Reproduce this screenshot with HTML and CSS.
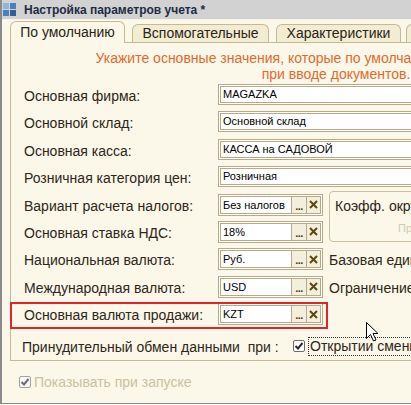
FILE: index.html
```html
<!DOCTYPE html>
<html lang="ru">
<head>
<meta charset="utf-8">
<title>Настройка параметров учета</title>
<link rel="stylesheet" href="styles.css">
</head>
<body>
<div class="window">
  <div class="titlebar">
    <svg class="appicon" width="13" height="13" viewBox="0 0 13 13">
      <rect x="0" y="0" width="6" height="6" fill="#8fb6e0"/>
      <rect x="7" y="0" width="6" height="6" fill="#4a7fc0"/>
      <rect x="0" y="7" width="6" height="6" fill="#4a7fc0"/>
      <rect x="7" y="7" width="6" height="6" fill="#2f5f9e"/>
    </svg>
    <span class="title">Настройка параметров учета *</span>
  </div>
  <div class="content">
    <div class="tabs">
      <div class="tab active">По умолчанию</div>
      <div class="tab t2">Вспомогательные</div>
      <div class="tab t3">Характеристики</div>
      <div class="tab stub"></div>
    </div>
    <div class="panel">
      <p class="hint">Укажите основные значения, которые по умолчанию будут подставляться<br>при вводе документов.</p>
      <div class="row"><span class="label">Основная фирма:</span><div class="field wide"><span class="value">MAGAZKA</span></div></div>
      <div class="row"><span class="label">Основной склад:</span><div class="field wide"><span class="value">Основной склад</span></div></div>
      <div class="row"><span class="label">Основная касса:</span><div class="field wide"><span class="value">КАССА на САДОВОЙ</span></div></div>
      <div class="row"><span class="label">Розничная категория цен:</span><div class="field wide"><span class="value">Розничная</span></div></div>
      <div class="split">
        <div class="col">
          <div class="row"><span class="label">Вариант расчета налогов:</span>
            <div class="field short"><span class="value">Без налогов</span><span class="btn dots">...</span><span class="btn clear"><svg width="9" height="9" viewBox="0 0 9 9"><path d="M1 1L8 8M8 1L1 8" stroke="#5a4812" stroke-width="2"/></svg></span></div>
          </div>
          <div class="row"><span class="label">Основная ставка НДС:</span>
            <div class="field short"><span class="value">18%</span><span class="btn dots">...</span><span class="btn clear"><svg width="9" height="9" viewBox="0 0 9 9"><path d="M1 1L8 8M8 1L1 8" stroke="#5a4812" stroke-width="2"/></svg></span></div>
          </div>
        </div>
        <div class="groupbox"><span class="gb-title">Коэфф. округления</span><span class="gb-sub">Применять</span></div>
      </div>
      <div class="row"><span class="label">Национальная валюта:</span>
        <div class="field short"><span class="value">Руб.</span><span class="btn dots">...</span><span class="btn clear"><svg width="9" height="9" viewBox="0 0 9 9"><path d="M1 1L8 8M8 1L1 8" stroke="#5a4812" stroke-width="2"/></svg></span></div>
        <span class="side">Базовая единица</span>
      </div>
      <div class="row"><span class="label">Международная валюта:</span>
        <div class="field short"><span class="value">USD</span><span class="btn dots">...</span><span class="btn clear"><svg width="9" height="9" viewBox="0 0 9 9"><path d="M1 1L8 8M8 1L1 8" stroke="#5a4812" stroke-width="2"/></svg></span></div>
        <span class="side">Ограничение</span>
      </div>
      <div class="row highlight"><span class="label">Основная валюта продажи:</span>
        <div class="field short"><span class="value">KZT</span><span class="btn dots">...</span><span class="btn clear"><svg width="9" height="9" viewBox="0 0 9 9"><path d="M1 1L8 8M8 1L1 8" stroke="#5a4812" stroke-width="2"/></svg></span></div>
      </div>
      <div class="row last"><span class="label exch">Принудительный обмен данными  при :</span>
        <span class="check"><svg width="10" height="10" viewBox="0 0 10 10"><path d="M1.5 5L4 7.5L8.5 2" fill="none" stroke="#2a2a2a" stroke-width="2"/></svg></span>
        <span class="focus">Открытии смены</span>
      </div>
    </div>
    <div class="startup">
      <span class="check disabled"><svg width="10" height="10" viewBox="0 0 10 10"><path d="M1.5 5L4 7.5L8.5 2" fill="none" stroke="#6e6e6e" stroke-width="2"/></svg></span>
      <span class="startup-text">Показывать при запуске</span>
    </div>
  </div>
  <svg class="cursor" width="13" height="20" viewBox="0 0 13 20">
    <path d="M0.5 0.5L0.5 16.5L4.5 12.5L7.5 19L10 18L7 11.5L12 11.5Z" fill="#fff" stroke="#000" stroke-width="1"/>
  </svg>
</div>
</body>
</html>
```
FILE: styles.css
```css
html, body {
  margin: 0;
  padding: 0;
  background: #ffffff;
}
body {
  width: 411px;
  height: 405px;
  overflow: hidden;
  font-family: "Liberation Sans", Arial, sans-serif;
  color: #2e2618;
}
.window {
  position: relative;
  width: 411px;
  height: 404px;
  box-sizing: border-box;
  border-left: 2px solid #8a8a8a;
  border-bottom: 1px solid #8a8a8a;
  display: flex;
  flex-direction: column;
  overflow: hidden;
}
.titlebar {
  height: 19px;
  flex: none;
  background: #d2d2d2;
  display: flex;
  align-items: center;
  padding-left: 1px;
}
.appicon {
  margin-right: 8px;
}
.title {
  font-weight: bold;
  font-size: 12px;
  color: #1d2c44;
  white-space: nowrap;
}
.content {
  flex: 1;
  background: #fbf8ea;
  border-top: 1px solid #f4f2ea;
  padding-left: 8px;
  overflow: hidden;
}
.tabs {
  display: flex;
  align-items: flex-end;
  height: 22px;
  gap: 7px;
  white-space: nowrap;
}
.tab {
  flex: none;
  box-sizing: border-box;
  font-size: 14px;
  text-align: center;
  border: 1px solid #c4b993;
  border-bottom: none;
  border-radius: 6px 6px 0 0;
  background: #f2ecd3;
  height: 18px;
  line-height: 14px;
  padding-top: 1px;
  color: #2b2315;
}
.tab.active {
  width: 115px;
  height: 22px;
  margin-bottom: -1px;
  line-height: 20px;
  padding-top: 0;
  background: #fbf8ea;
  position: relative;
  z-index: 1;
}
.tab.t2 { width: 137px; }
.tab.t3 { width: 125px; }
.tab.stub { width: 30px; margin-left: -2px; }
.panel {
  width: 700px;
  border-top: 1px solid #c4b993;
  border-left: 1px solid #c4b993;
  border-bottom: 1px solid #c4b993;
}
.hint {
  margin: 0;
  padding-top: 7px;
  padding-bottom: 2px;
  width: 650px;
  text-align: center;
  font-size: 14px;
  line-height: 16px;
  color: #e26a2c;
  white-space: nowrap;
}
.row {
  display: flex;
  align-items: flex-start;
  height: 27.4px;
  white-space: nowrap;
}
.label {
  flex: none;
  box-sizing: border-box;
  width: 207px;
  padding-left: 13px;
  padding-top: 2px;
  font-size: 14px;
  line-height: 21px;
  color: #2e2618;
}
.field {
  flex: none;
  box-sizing: border-box;
  height: 21px;
  border: 3px double #b6ab86;
  background: #ffffff;
  display: flex;
}
.field.wide { width: 500px; }
.field.short { width: 105px; height: 22px; }
.value {
  flex: 1;
  font-size: 11px;
  line-height: 15px;
  padding-left: 2px;
  color: #000;
  overflow: hidden;
}
.field.short .value {
  line-height: 16px;
}
.btn {
  flex: none;
  box-sizing: border-box;
  border-left: 1px solid #b6ab86;
  background: #f3efdc;
  display: flex;
  align-items: center;
  justify-content: center;
}
.btn.dots {
  width: 15px;
  font-size: 11px;
  font-weight: bold;
  line-height: 13px;
  color: #4a3c14;
  align-items: flex-end;
  letter-spacing: -0.5px;
}
.btn.clear {
  width: 14px;
}
.side {
  margin-left: 6px;
  padding-top: 2px;
  font-size: 14px;
  line-height: 21px;
  color: #2e2618;
}
.split {
  display: flex;
  align-items: flex-start;
}
.col {
  flex: none;
}
.groupbox {
  flex: none;
  box-sizing: border-box;
  margin-left: 6px;
  margin-top: -2.6px;
  width: 300px;
  height: 51px;
  border: 1px solid #cbc09c;
  border-radius: 4px;
  padding: 4px 0 0 5px;
  display: flex;
  flex-direction: column;
  white-space: nowrap;
}
.gb-title {
  font-size: 14px;
  line-height: 20px;
  color: #2e2618;
}
.gb-sub {
  font-size: 11px;
  line-height: 14px;
  padding-left: 63px;
  padding-top: 5px;
  color: #cfc9b6;
}
.highlight {
  position: relative;
}
.highlight::after {
  content: "";
  position: absolute;
  left: -1px;
  top: -1.2px;
  width: 318px;
  height: 27px;
  box-sizing: border-box;
  border: 2px solid #e3232a;
}
.row.last {
  height: 29.4px;
}
.label.exch {
  width: 282px;
  padding-left: 11px;
  padding-top: 6px;
  white-space: pre;
}
.check {
  flex: none;
  box-sizing: border-box;
  width: 12px;
  height: 12px;
  margin-top: 9.4px;
  border: 1px solid #6c6c6c;
  border-radius: 2px;
  background: #ffffff;
  display: flex;
  align-items: center;
  justify-content: center;
}
.focus {
  margin-left: 3px;
  margin-top: 6.4px;
  padding: 0 2px 0 1px;
  border: 1px dotted #333;
  border-right: none;
  font-size: 14px;
  line-height: 17px;
  color: #2e2618;
  width: 200px;
}
.startup {
  display: flex;
  align-items: center;
  padding-top: 14px;
  padding-left: 9px;
}
.check.disabled {
  margin-top: 0;
  border-color: #a2a2a2;
  background: #f6f6f4;
}
.startup-text {
  margin-left: 3px;
  font-size: 14px;
  line-height: 14px;
  color: #ccc09c;
}
.cursor {
  position: absolute;
  left: 364px;
  top: 322px;
}
```
